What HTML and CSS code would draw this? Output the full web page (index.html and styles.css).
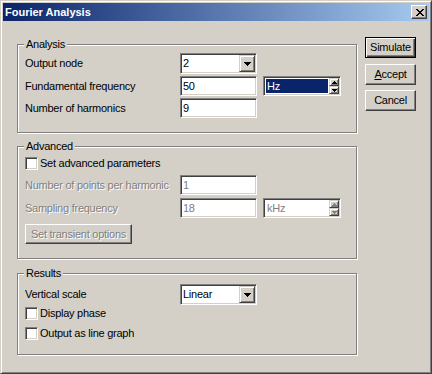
FILE: index.html
```html
<!DOCTYPE html>
<html>
<head>
<meta charset="utf-8">
<link rel="stylesheet" href="styles.css">
</head>
<body>
<div class="window">
  <div class="titlebar">
    <span class="title">Fourier Analysis</span>
    <span class="close-btn"><svg width="8" height="7" viewBox="0 0 8 7" shape-rendering="crispEdges"><path fill="#000" d="M0 0h2v1H0zM6 0h2v1H6zM1 1h2v1H1zM5 1h2v1H5zM2 2h4v1H2zM3 3h2v1H3zM2 4h4v1H2zM1 5h2v1H1zM5 5h2v1H5zM0 6h2v1H0zM6 6h2v1H6z"/></svg></span>
  </div>
  <div class="client">
    <div class="groups">
      <div class="group group-analysis">
        <div class="group-title">Analysis</div>
        <div class="form-grid grid-analysis">
          <div class="label">Output node</div>
          <div class="combo"><span class="combo-text">2</span><span class="dd-btn"><svg width="7" height="4" viewBox="0 0 7 4" shape-rendering="crispEdges"><path fill="#000" d="M0 0h7v1H0zM1 1h5v1H1zM2 2h3v1H2zM3 3h1v1H3z"/></svg></span></div>
          <div class="label">Fundamental frequency</div>
          <div class="field">50</div>
          <div class="spin"><span class="spin-text selected">Hz</span><span class="spin-btns"><span class="spin-btn"><svg width="5" height="3" viewBox="0 0 5 3" shape-rendering="crispEdges"><path fill="#000" d="M2 0h1v1H2zM1 1h3v1H1zM0 2h5v1H0z"/></svg></span><span class="spin-btn"><svg width="5" height="3" viewBox="0 0 5 3" shape-rendering="crispEdges"><path fill="#000" d="M0 0h5v1H0zM1 1h3v1H1zM2 2h1v1H2z"/></svg></span></span></div>
          <div class="label">Number of harmonics</div>
          <div class="field">9</div>
        </div>
      </div>
      <div class="group group-advanced">
        <div class="group-title">Advanced</div>
        <div class="check-row check-adv">
          <span class="checkbox"></span><span class="check-label">Set advanced parameters</span>
        </div>
        <div class="form-grid grid-advanced">
          <div class="label disabled">Number of points per harmonic</div>
          <div class="field field-disabled">1</div>
          <div class="label disabled">Sampling frequency</div>
          <div class="field field-disabled">18</div>
          <div class="spin spin-disabled"><span class="spin-text">kHz</span><span class="spin-btns"><span class="spin-btn"><svg width="5" height="3" viewBox="0 0 5 3" shape-rendering="crispEdges"><path fill="#808080" d="M2 0h1v1H2zM1 1h3v1H1zM0 2h5v1H0z"/></svg></span><span class="spin-btn"><svg width="5" height="3" viewBox="0 0 5 3" shape-rendering="crispEdges"><path fill="#808080" d="M0 0h5v1H0zM1 1h3v1H1zM2 2h1v1H2z"/></svg></span></span></div>
        </div>
        <div class="btn btn-transient disabled">Set transient options</div>
      </div>
      <div class="group group-results">
        <div class="group-title">Results</div>
        <div class="form-grid grid-results">
          <div class="label">Vertical scale</div>
          <div class="combo"><span class="combo-text">Linear</span><span class="dd-btn"><svg width="7" height="4" viewBox="0 0 7 4" shape-rendering="crispEdges"><path fill="#000" d="M0 0h7v1H0zM1 1h5v1H1zM2 2h3v1H2zM3 3h1v1H3z"/></svg></span></div>
        </div>
        <div class="check-row check-phase">
          <span class="checkbox"></span><span class="check-label">Display phase</span>
        </div>
        <div class="check-row check-line">
          <span class="checkbox"></span><span class="check-label">Output as line graph</span>
        </div>
      </div>
    </div>
    <div class="buttons">
      <div class="btn btn-side btn-default">Simulate</div>
      <div class="btn btn-side btn-accept"><span><u>A</u>ccept</span></div>
      <div class="btn btn-side">Cancel</div>
    </div>
  </div>
</div>
</body>
</html>
```

FILE: styles.css
```css
* { box-sizing: border-box; }
html, body { margin: 0; padding: 0; }
body {
  width: 432px;
  height: 374px;
  overflow: hidden;
  background: #D4D0C8;
  font-family: "Liberation Sans", Arial, sans-serif;
  font-size: 11px;
  letter-spacing: -0.25px;
  color: #000;
}

.window {
  width: 432px;
  height: 374px;
  background: #D4D0C8;
  border: 1px solid;
  border-color: #D4D0C8 #404040 #404040 #D4D0C8;
  box-shadow: inset 1px 1px 0 #fff, inset -1px -1px 0 #808080;
  padding: 2px;
  display: flex;
  flex-direction: column;
}

.titlebar {
  height: 18px;
  background: linear-gradient(to right, #0A246A, #A6CAF0);
  display: flex;
  align-items: center;
  padding: 0 2px 0 2px;
}
.title {
  flex: 1;
  color: #fff;
  font-weight: bold;
  font-size: 11px;
  letter-spacing: 0;
  line-height: 18px;
}
.close-btn {
  width: 16px;
  height: 14px;
  background: #D4D0C8;
  border: 1px solid;
  border-color: #fff #404040 #404040 #fff;
  box-shadow: inset -1px -1px 0 #808080;
  display: flex;
  align-items: center;
  justify-content: center;
  padding-left: 1px;
}
.close-btn svg { display: block; }

.client {
  flex: 1;
  display: flex;
  align-items: flex-start;
  padding-left: 14px;
}
.groups {
  width: 340px;
  padding-top: 23px;
}
.buttons {
  display: flex;
  flex-direction: column;
  gap: 5px;
  margin-left: 8px;
  padding-top: 16px;
}

.group {
  border: 1px solid #808080;
  box-shadow: 1px 1px 0 #fff, inset 1px 1px 0 #fff;
  padding: 0 7px 14px 7px;
}
.group-advanced { margin-top: 13px; }
.group-results { margin-top: 14px; }

.group-title {
  width: fit-content;
  height: 13px;
  line-height: 13px;
  margin: -7px 0 0 -1px;
  padding: 0 2px;
  background: #D4D0C8;
}

.form-grid {
  display: grid;
  grid-template-columns: 149px 77px 78px;
  column-gap: 6px;
  align-items: center;
}
.form-grid .label { grid-column: 1; line-height: 13px; white-space: nowrap; }
.grid-analysis { margin-top: 2px; row-gap: 2px; }
.grid-advanced { margin-top: 5px; row-gap: 3px; }
.grid-results { margin-top: 4px; }

.disabled {
  color: #808080;
  text-shadow: 1px 1px 0 #fff;
}

.field {
  width: 77px;
  height: 20px;
  background: #fff;
  border: 1px solid;
  border-color: #808080 #fff #fff #808080;
  box-shadow: inset 1px 1px 0 #404040, inset -1px -1px 0 #D4D0C8;
  padding-left: 2px;
  line-height: 18px;
}
.field-disabled { color: #808080; }

.combo {
  width: 77px;
  height: 21px;
  background: #fff;
  border: 1px solid;
  border-color: #808080 #fff #fff #808080;
  box-shadow: inset 1px 1px 0 #404040, inset -1px -1px 0 #D4D0C8;
  display: flex;
  align-items: center;
}
.combo-text {
  flex: 1;
  padding-left: 2px;
  line-height: 17px;
}
.dd-btn {
  width: 16px;
  height: 17px;
  margin: 1px;
  background: #D4D0C8;
  border: 1px solid;
  border-color: #D4D0C8 #404040 #404040 #D4D0C8;
  box-shadow: inset 1px 1px 0 #fff, inset -1px -1px 0 #808080;
  display: flex;
  align-items: center;
  justify-content: center;
}
.dd-btn svg { display: block; }

.spin {
  width: 78px;
  height: 20px;
  background: #fff;
  border: 1px solid;
  border-color: #808080 #fff #fff #808080;
  box-shadow: inset 1px 1px 0 #404040, inset -1px -1px 0 #D4D0C8;
  padding: 1px;
  display: flex;
}
.spin-text {
  flex: 1;
  margin: 1px;
  padding-left: 1px;
  line-height: 14px;
}
.spin-text.selected {
  background: #0A246A;
  color: #fff;
}
.spin-disabled .spin-text { color: #808080; }
.spin-btns {
  width: 10px;
  display: flex;
  flex-direction: column;
}
.spin-btn {
  flex: 1;
  background: #D4D0C8;
  border: 1px solid;
  border-color: #D4D0C8 #404040 #404040 #D4D0C8;
  box-shadow: inset 1px 1px 0 #fff, inset -1px -1px 0 #808080;
  display: flex;
  align-items: center;
  justify-content: center;
}
.spin-btn svg { display: block; }

.check-row {
  display: flex;
  align-items: center;
  gap: 2px;
  height: 13px;
}
.check-adv { margin-top: 4px; }
.check-phase { margin-top: 2px; }
.check-line { margin-top: 7px; }
.checkbox {
  width: 13px;
  height: 13px;
  background: #fff;
  border: 1px solid;
  border-color: #808080 #fff #fff #808080;
  box-shadow: inset 1px 1px 0 #404040, inset -1px -1px 0 #D4D0C8;
}
.check-label { line-height: 13px; }

.btn {
  height: 21px;
  background: #D4D0C8;
  border: 1px solid;
  border-color: #fff #404040 #404040 #fff;
  box-shadow: inset -1px -1px 0 #808080;
  display: flex;
  align-items: center;
  justify-content: center;
  line-height: 13px;
}
.btn-side { width: 51px; }
.btn-accept { margin-top: 1px; }
.btn-default {
  border-color: #000;
  box-shadow: inset 1px 1px 0 #fff, inset -1px -1px 0 #404040, inset -2px -2px 0 #808080;
}
.btn-transient {
  width: 107px;
  height: 20px;
  margin-top: 6px;
}
```
